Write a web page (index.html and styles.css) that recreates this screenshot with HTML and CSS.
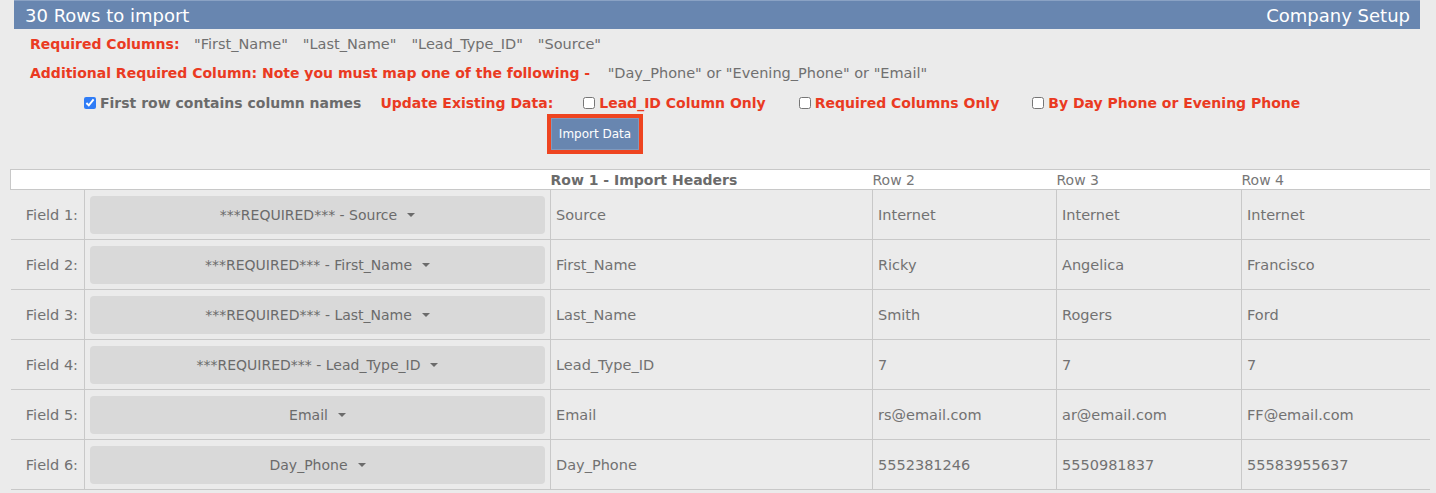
FILE: index.html
```html
<!DOCTYPE html>
<html lang="en">
<head>
    <meta charset="UTF-8">
    <title>Import Leads</title>
    <link rel="stylesheet" href="styles.css">
</head>
<body>
    <div class="page">
        <div class="title-bar">
            <span>30 Rows to import</span>
            <span>Company Setup</span>
        </div>

        <div class="notes">
            <p><span class="req">Required Columns:</span>
                <span class="col">"First_Name"</span><span class="col">"Last_Name"</span><span class="col">"Lead_Type_ID"</span><span class="col">"Source"</span></p>
            <p><span class="req wide">Additional Required Column: Note you must map one of the following -</span>
                <span class="col">"Day_Phone" or "Evening_Phone" or "Email"</span></p>
        </div>

        <div class="options">
            <label class="opt first"><input type="checkbox" checked> First row contains column names</label>
            <span class="req">Update Existing Data:</span>
            <label class="opt red"><input type="checkbox"> Lead_ID Column Only</label>
            <label class="opt red"><input type="checkbox"> Required Columns Only</label>
            <label class="opt red"><input type="checkbox"> By Day Phone or Evening Phone</label>
        </div>

        <div class="actions">
            <button class="btn-import">Import Data</button>
        </div>

        <table class="map-table">
            <colgroup>
                <col style="width:74px">
                <col style="width:466px">
                <col style="width:322px">
                <col style="width:184px">
                <col style="width:185px">
                <col>
            </colgroup>
            <thead>
                <tr>
                    <th></th>
                    <th></th>
                    <th class="bold">Row 1 - Import Headers</th>
                    <th>Row 2</th>
                    <th>Row 3</th>
                    <th>Row 4</th>
                </tr>
            </thead>
            <tbody>
                <tr>
                    <td class="field">Field 1:</td>
                    <td class="pick"><div class="select">***REQUIRED*** - Source <span class="caret"></span></div></td>
                    <td>Source</td><td>Internet</td><td>Internet</td><td>Internet</td>
                </tr>
                <tr>
                    <td class="field">Field 2:</td>
                    <td class="pick"><div class="select">***REQUIRED*** - First_Name <span class="caret"></span></div></td>
                    <td>First_Name</td><td>Ricky</td><td>Angelica</td><td>Francisco</td>
                </tr>
                <tr>
                    <td class="field">Field 3:</td>
                    <td class="pick"><div class="select">***REQUIRED*** - Last_Name <span class="caret"></span></div></td>
                    <td>Last_Name</td><td>Smith</td><td>Rogers</td><td>Ford</td>
                </tr>
                <tr>
                    <td class="field">Field 4:</td>
                    <td class="pick"><div class="select">***REQUIRED*** - Lead_Type_ID <span class="caret"></span></div></td>
                    <td>Lead_Type_ID</td><td>7</td><td>7</td><td>7</td>
                </tr>
                <tr>
                    <td class="field">Field 5:</td>
                    <td class="pick"><div class="select">Email <span class="caret"></span></div></td>
                    <td>Email</td><td>rs@email.com</td><td>ar@email.com</td><td>FF@email.com</td>
                </tr>
                <tr>
                    <td class="field">Field 6:</td>
                    <td class="pick"><div class="select">Day_Phone <span class="caret"></span></div></td>
                    <td>Day_Phone</td><td>5552381246</td><td>5550981837</td><td>55583955637</td>
                </tr>
            </tbody>
        </table>
    </div>
</body>
</html>
```

FILE: styles.css
```css
* {
    margin: 0;
    padding: 0;
    box-sizing: border-box;
}

body {
    font-family: "DejaVu Sans", Verdana, sans-serif;
    background: #ebebeb;
    color: #6b6b6b;
    font-size: 14px;
}

.page {
    padding: 0 6px 0 10px;
}

.title-bar {
    margin: 0 10px 0 4px;
    height: 29px;
    background: #6886b0;
    border-top: 1px solid #8aa2c4;
    color: #fff;
    font-size: 18px;
    display: flex;
    justify-content: space-between;
    align-items: center;
    padding: 0 10px 0 11px;
}

.notes {
    padding: 1px 0 0 20px;
}

.notes p {
    height: 29px;
    line-height: 29px;
    white-space: nowrap;
}

.notes p + p {
    height: 28px;
}

.req {
    color: #ea3a22;
    font-weight: bold;
    margin-right: 10px;
}

.req.wide {
    margin-right: 13px;
}

.col {
    color: #707070;
    font-size: 14.5px;
    margin-right: 15px;
}

.options {
    display: flex;
    align-items: center;
    padding-left: 74px;
    height: 24px;
    margin-top: 4px;
    white-space: nowrap;
}

.options .req {
    margin-right: 30px;
}

.opt {
    display: flex;
    align-items: center;
    gap: 4px;
    font-weight: bold;
}

.opt.first {
    margin-right: 19px;
}

.opt.red {
    color: #ea3a22;
    margin-right: 33px;
}

.opt input {
    width: 12px;
    height: 12px;
    margin: 0;
    accent-color: #2f7cf6;
}

.actions {
    padding-left: 537px;
    margin-top: -1px;
}

.btn-import {
    background: #6886b0;
    color: #fff;
    font-family: "DejaVu Sans", Verdana, sans-serif;
    font-size: 12px;
    border: 4px solid #ee4420;
    box-shadow: inset 0 0 0 1px #8099bd;
    padding: 0 6px;
    height: 40px;
    width: 96px;
}

.map-table {
    margin-top: 15px;
    width: 1420px;
    border-collapse: collapse;
    table-layout: fixed;
    font-size: 14.5px;
}

.map-table th {
    background: #fff;
    height: 20px;
    font-weight: normal;
    text-align: left;
    font-size: 14px;
    border-top: 1px solid #c8c8c8;
    border-bottom: 1px solid #c8c8c8;
    color: #777;
}

.map-table th:first-child {
    border-left: 1px solid #c8c8c8;
}

.map-table th.bold {
    font-weight: bold;
    color: #6b6b6b;
}

.map-table td {
    height: 50px;
    border-bottom: 1px solid #c8c8c8;
    border-left: 1px solid #c8c8c8;
    padding: 0 5px;
    white-space: nowrap;
    color: #727272;
}

.map-table td:first-child {
    border-left: none;
}

.map-table td.field {
    text-align: right;
    padding-right: 6px;
}

.map-table td.pick {
    padding: 0 5px;
}

.select {
    height: 38px;
    background: #d9d9d9;
    border-radius: 4px;
    display: flex;
    align-items: center;
    justify-content: center;
    font-size: 14px;
    color: #6b6b6b;
}

.caret {
    width: 0;
    height: 0;
    border-left: 4px solid transparent;
    border-right: 4px solid transparent;
    border-top: 4px solid #6b6b6b;
    margin-left: 10px;
}
```
